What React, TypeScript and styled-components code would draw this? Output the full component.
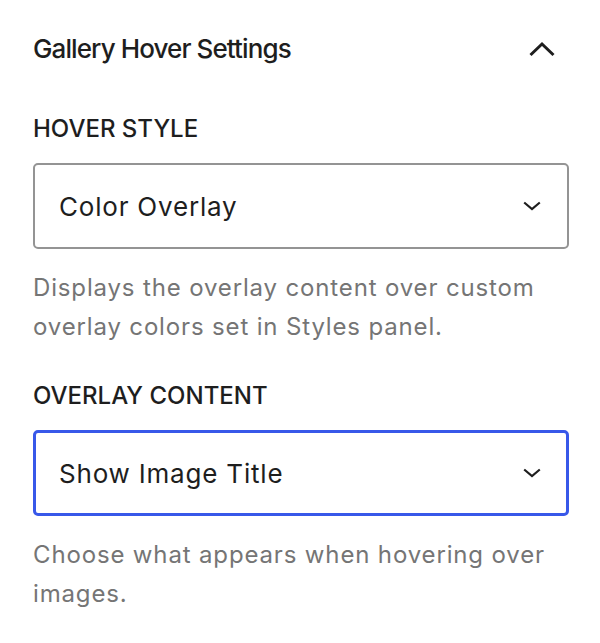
import React from "react";
import styled, { createGlobalStyle } from "styled-components";

const Global = createGlobalStyle`
  html, body { margin: 0; padding: 0; background: #ffffff; }
  body { font-family: Inter, "Noto Sans", "Liberation Sans", sans-serif; color: #1e1e1e; }
  * { box-sizing: border-box; }
`;

const Panel = styled.section`
  width: 600px;
  padding: 0 31px 0 33px;
  display: flex;
  flex-direction: column;
`;

const Header = styled.div`
  height: 98px;
  display: flex;
  align-items: center;
  justify-content: space-between;
`;

const Title = styled.h2`
  margin: 0;
  font-size: 26px;
  line-height: 32px;
  font-weight: 500;
  letter-spacing: -0.9px;
  color: #1e1e1e;
`;

const IconWrap = styled.span`
  display: flex;
  width: 48px;
  height: 48px;
  align-items: center;
  justify-content: center;
  margin-right: 3px;
`;

const Field = styled.div<{ $top: number }>`
  display: flex;
  flex-direction: column;
  margin-top: ${(p) => p.$top}px;
`;

const Label = styled.div`
  font-size: 24px;
  line-height: 32px;
  font-weight: 500;
  text-transform: uppercase;
  color: #1e1e1e;
  margin-bottom: 18px;
`;

const Select = styled.div<{ $focused?: boolean }>`
  height: 86px;
  border: ${(p) => (p.$focused ? "3px solid #3858e9" : "2px solid #949494")};
  border-radius: 5px;
  display: flex;
  align-items: center;
  justify-content: space-between;
  padding: 0 ${(p) => (p.$focused ? 25 : 26)}px 0 ${(p) => (p.$focused ? 23 : 24)}px;
  font-size: 26px;
  letter-spacing: 0.8px;
  color: #1e1e1e;
`;

const Help = styled.p`
  margin: 19px 0 0;
  font-size: 24px;
  line-height: 39px;
  letter-spacing: 0.85px;
  color: #757575;
`;

const ChevronDown = () => (
  <svg width="18" height="18" viewBox="0 0 18 18" fill="none">
    <path d="M1.2 5.5 L9 12 L16.8 5.5" stroke="#1e1e1e" strokeWidth="2.2" />
  </svg>
);

const ChevronUp = () => (
  <svg width="26" height="26" viewBox="0 0 26 26" fill="none">
    <path d="M1.5 19 L13 8 L24.5 19" stroke="#1e1e1e" strokeWidth="3" />
  </svg>
);

export default function App() {
  return (
    <>
      <Global />
      <Panel>
        <Header>
          <Title>Gallery Hover Settings</Title>
          <IconWrap>
            <ChevronUp />
          </IconWrap>
        </Header>
        <Field $top={15}>
          <Label>Hover Style</Label>
          <Select>
            <span>Color Overlay</span>
            <ChevronDown />
          </Select>
          <Help>Displays the overlay content over custom overlay colors set in Styles panel.</Help>
        </Field>
        <Field $top={34}>
          <Label>Overlay Content</Label>
          <Select $focused>
            <span>Show Image Title</span>
            <ChevronDown />
          </Select>
          <Help>Choose what appears when hovering over images.</Help>
        </Field>
      </Panel>
    </>
  );
}
